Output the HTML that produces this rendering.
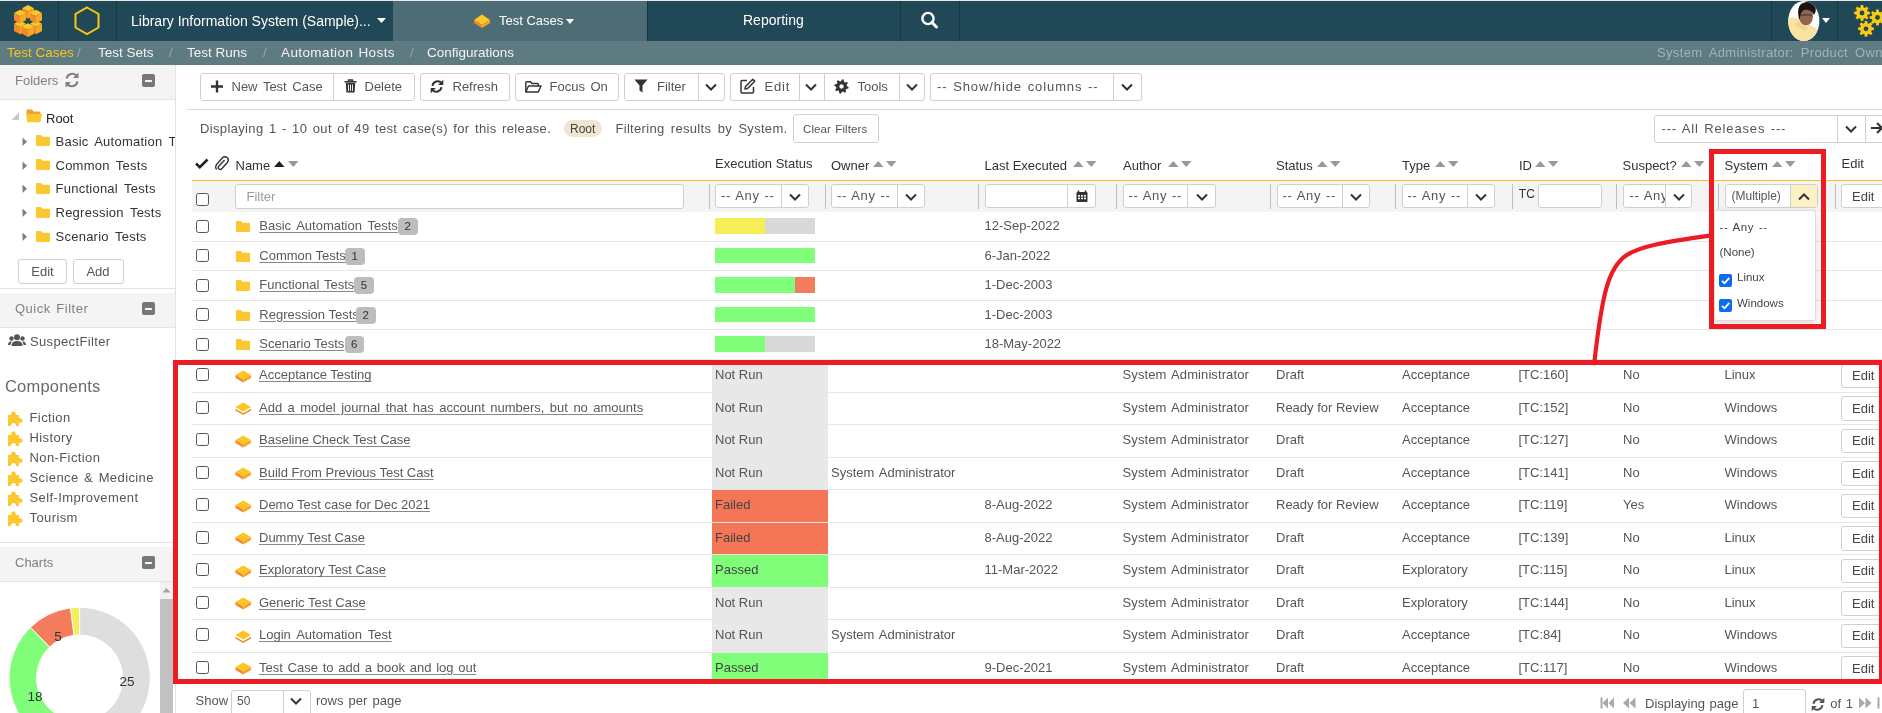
<!DOCTYPE html>
<html><head><meta charset="utf-8"><title>Test Cases</title>
<style>
html,body{margin:0;padding:0}
body{width:1882px;height:713px;overflow:hidden;position:relative;background:#fff;font-family:"Liberation Sans",sans-serif;font-size:13px;color:#555}
.a{position:absolute;display:block}
.t{position:absolute;white-space:nowrap;-webkit-font-smoothing:antialiased}
.btn{position:absolute;box-sizing:border-box;border:1px solid #cfcfcf;border-radius:3px;background:#fff;text-align:center;font-size:13px;color:#555}
</style></head><body><div id="root" style="position:absolute;left:0;top:0;width:1882px;height:713px;overflow:hidden;will-change:transform">
<div class="a" style="left:0px;top:0px;width:1882px;height:1px;background:#e9e9e9"></div>
<div class="a" style="left:0px;top:1px;width:1882px;height:40px;background:#214856"></div>
<div class="a" style="left:393px;top:1px;width:254px;height:40px;background:#4d6c75"></div>
<div class="a" style="left:58px;top:1px;width:1px;height:40px;background:#163642"></div>
<div class="a" style="left:116px;top:1px;width:1px;height:40px;background:#163642"></div>
<div class="a" style="left:647px;top:1px;width:1px;height:40px;background:#163642"></div>
<div class="a" style="left:900px;top:1px;width:1px;height:40px;background:#163642"></div>
<div class="a" style="left:959px;top:1px;width:1px;height:40px;background:#163642"></div>
<div class="a" style="left:1771px;top:1px;width:1px;height:40px;background:#163642"></div>
<div class="a" style="left:1837px;top:1px;width:1px;height:40px;background:#163642"></div>
<svg class="a" style="left:0px;top:0px;" width="58" height="41" viewBox="0 0 58 41"><path d="M28 5 L34 8.25 L28 11.5 L22 8.25 Z" fill="#fdc824"/><path d="M22 8.25 L28 11.5 L28 18.7 L22 15.45 Z" fill="#f28a2b"/><path d="M34 8.25 L28 11.5 L28 18.7 L34 15.45 Z" fill="#f5a82a"/><path d="M20 20.6 L26 23.85 L20 27.1 L14 23.85 Z" fill="#fdc824"/><path d="M14 23.85 L20 27.1 L20 34.300000000000004 L14 31.05 Z" fill="#f28a2b"/><path d="M26 23.85 L20 27.1 L20 34.300000000000004 L26 31.05 Z" fill="#f5a82a"/><path d="M36 20.6 L42 23.85 L36 27.1 L30 23.85 Z" fill="#fdc824"/><path d="M30 23.85 L36 27.1 L36 34.300000000000004 L30 31.05 Z" fill="#f28a2b"/><path d="M42 23.85 L36 27.1 L36 34.300000000000004 L42 31.05 Z" fill="#f5a82a"/><path d="M20 9.7 L26 12.95 L20 16.2 L14 12.95 Z" fill="#fdc824"/><path d="M14 12.95 L20 16.2 L20 23.4 L14 20.15 Z" fill="#f28a2b"/><path d="M26 12.95 L20 16.2 L20 23.4 L26 20.15 Z" fill="#f5a82a"/><path d="M36 9.7 L42 12.95 L36 16.2 L30 12.95 Z" fill="#fdc824"/><path d="M30 12.95 L36 16.2 L36 23.4 L30 20.15 Z" fill="#f28a2b"/><path d="M42 12.95 L36 16.2 L36 23.4 L42 20.15 Z" fill="#f5a82a"/><path d="M28 23.3 L34 26.55 L28 29.8 L22 26.55 Z" fill="#fdc824"/><path d="M22 26.55 L28 29.8 L28 37.0 L22 33.75 Z" fill="#f28a2b"/><path d="M34 26.55 L28 29.8 L28 37.0 L34 33.75 Z" fill="#f5a82a"/></svg>
<svg class="a" style="left:58px;top:0px;" width="58" height="41" viewBox="0 0 58 41"><path d="M29 7.5 L40.5 14 L40.5 27.5 L29 34 L17.5 27.5 L17.5 14 Z" fill="none" stroke="#f9c80e" stroke-width="2"/></svg>
<div class="t" style="left:131px;top:13.6px;font-size:14px;line-height:14px;color:#ffffff;">Library Information System (Sample)...</div>
<svg class="a" style="left:377px;top:17.5px;" width="10" height="6" viewBox="0 0 10 6"><path d="M0 0 L9 0 L4.5 5 Z" fill="#fff"/></svg>
<svg class="a" style="left:473px;top:13px;" width="18" height="16" viewBox="0 0 18 16"><path d="M9 1.5 L17 7 L9 12 L1 7 Z" fill="#fdc824"/><path d="M1 7 L9 12 L9 15 L1 10 Z" fill="#f28a2b"/><path d="M17 7 L9 12 L9 15 L17 10 Z" fill="#f5a62a"/></svg>
<div class="t" style="left:499px;top:14.0px;font-size:13px;line-height:13px;color:#ffffff;">Test Cases</div>
<svg class="a" style="left:566px;top:19px;" width="9" height="6" viewBox="0 0 9 6"><path d="M0 0 L8 0 L4 5 Z" fill="#fff"/></svg>
<div class="t" style="left:743px;top:13.1px;font-size:14px;line-height:14px;color:#ffffff;">Reporting</div>
<svg class="a" style="left:920px;top:11px;" width="20" height="19" viewBox="0 0 20 19"><circle cx="8" cy="7.5" r="5.6" fill="none" stroke="#fff" stroke-width="2.4"/><path d="M12 11.5 L16.5 16" stroke="#fff" stroke-width="3" stroke-linecap="round"/></svg>
<svg class="a" style="left:1786px;top:0px;" width="36" height="42" viewBox="0 0 36 42"><defs><clipPath id="av"><ellipse cx="17.8" cy="21" rx="15.6" ry="20"/></clipPath></defs><ellipse cx="17.8" cy="21" rx="15.6" ry="20" fill="#fdfdfd"/><g clip-path="url(#av)"><path d="M0 19 Q8 16 14 20 L22 24 Q30 27 36 34 L36 42 L0 42 Z" fill="#f9e2a2"/><path d="M10 21 L22 28 L20 31 L9 25 Z" fill="#f3d58c"/><ellipse cx="20" cy="16.5" rx="7" ry="8.8" fill="#8e6650"/><path d="M13 19 Q10 6 17 3 Q24 0 29 6 Q31 11 28 15 Q25 9 18 10 Q14 12 14 19 Z" fill="#1b1412"/><path d="M14 15 H26" stroke="#3a2a22" stroke-width="1"/></g></svg>
<svg class="a" style="left:1822px;top:18px;" width="9" height="6" viewBox="0 0 9 6"><path d="M0 0 L8 0 L4 5 Z" fill="#fff"/></svg>
<svg class="a" style="left:1838px;top:1px;" width="44" height="40" viewBox="0 0 44 40"><polygon points="29.75,10.57 31.89,10.69 31.89,13.31 29.75,13.43 29.07,15.05 30.51,16.65 28.65,18.51 27.05,17.07 25.43,17.75 25.31,19.89 22.69,19.89 22.57,17.75 20.95,17.07 19.35,18.51 17.49,16.65 18.93,15.05 18.25,13.43 16.11,13.31 16.11,10.69 18.25,10.57 18.93,8.95 17.49,7.35 19.35,5.49 20.95,6.93 22.57,6.25 22.69,4.11 25.31,4.11 25.43,6.25 27.05,6.93 28.65,5.49 30.51,7.35 29.07,8.95" fill="#f9cc14"/><circle cx="24" cy="12" r="2.40" fill="#214856"/><polygon points="45.25,15.07 47.39,15.19 47.39,17.81 45.25,17.93 44.57,19.55 46.01,21.15 44.15,23.01 42.55,21.57 40.93,22.25 40.81,24.39 38.19,24.39 38.07,22.25 36.45,21.57 34.85,23.01 32.99,21.15 34.43,19.55 33.75,17.93 31.61,17.81 31.61,15.19 33.75,15.07 34.43,13.45 32.99,11.85 34.85,9.99 36.45,11.43 38.07,10.75 38.19,8.61 40.81,8.61 40.93,10.75 42.55,11.43 44.15,9.99 46.01,11.85 44.57,13.45" fill="#f9cc14"/><circle cx="39.5" cy="16.5" r="2.40" fill="#214856"/><polygon points="33.75,26.37 35.89,26.49 35.89,29.11 33.75,29.23 33.07,30.85 34.51,32.45 32.65,34.31 31.05,32.87 29.43,33.55 29.31,35.69 26.69,35.69 26.57,33.55 24.95,32.87 23.35,34.31 21.49,32.45 22.93,30.85 22.25,29.23 20.11,29.11 20.11,26.49 22.25,26.37 22.93,24.75 21.49,23.15 23.35,21.29 24.95,22.73 26.57,22.05 26.69,19.91 29.31,19.91 29.43,22.05 31.05,22.73 32.65,21.29 34.51,23.15 33.07,24.75" fill="#f9cc14"/><circle cx="28" cy="27.8" r="2.40" fill="#214856"/></svg>
<div class="a" style="left:0px;top:41px;width:1882px;height:24px;background:#5f7b82"></div>
<div class="t" style="left:7px;top:45.6px;font-size:13.5px;line-height:13.5px;color:#f7c61a;">Test Cases</div>
<div class="t" style="left:77px;top:46.0px;font-size:13px;line-height:13px;color:#94a8ac;">/</div>
<div class="t" style="left:98px;top:45.6px;font-size:13.5px;line-height:13.5px;color:#f4f4f4;">Test Sets</div>
<div class="t" style="left:169px;top:46.0px;font-size:13px;line-height:13px;color:#94a8ac;">/</div>
<div class="t" style="left:187px;top:45.6px;font-size:13.5px;line-height:13.5px;color:#f4f4f4;">Test Runs</div>
<div class="t" style="left:263px;top:46.0px;font-size:13px;line-height:13px;color:#94a8ac;">/</div>
<div class="t" style="left:281px;top:45.6px;font-size:13.5px;line-height:13.5px;color:#f4f4f4;word-spacing:1px;letter-spacing:0.4px">Automation Hosts</div>
<div class="t" style="left:410px;top:46.0px;font-size:13px;line-height:13px;color:#94a8ac;">/</div>
<div class="t" style="left:427px;top:45.6px;font-size:13.5px;line-height:13.5px;color:#f4f4f4;">Configurations</div>
<div class="t" style="left:1657px;top:46.0px;font-size:13px;line-height:13px;color:#a3b3b6;word-spacing:3px;letter-spacing:0.35px">System Administrator: Product Owner</div>
<div class="a" style="left:0px;top:65px;width:175px;height:648px;background:#ffffff"></div>
<div class="a" style="left:175px;top:65px;width:1px;height:648px;background:#e3e3e3"></div>
<div class="a" style="left:0px;top:65px;width:175px;height:34px;background:#f4f4f4;border-bottom:1px solid #e4e4e4"></div>
<div class="t" style="left:15px;top:73.5px;font-size:13px;line-height:13px;color:#808080;">Folders</div>
<svg class="a" style="left:63px;top:71px;" width="18" height="18" viewBox="0 0 18 18"><path d="M3.5 7.5 A6 6 0 0 1 14 5" fill="none" stroke="#808080" stroke-width="2.2"/><path d="M15.5 1.5 L15.5 7 L10 7 Z" fill="#808080"/><path d="M14.5 10.5 A6 6 0 0 1 4 13" fill="none" stroke="#808080" stroke-width="2.2"/><path d="M2.5 16.5 L2.5 11 L8 11 Z" fill="#808080"/></svg>
<div class="a" style="left:142px;top:74px;width:13px;height:13px;background:#777;border-radius:2px"></div>
<div class="a" style="left:145px;top:79.5px;width:7px;height:2px;background:#f4f4f4"></div>
<svg class="a" style="left:11px;top:112px;" width="9" height="9" viewBox="0 0 9 9"><path d="M8 0.5 L8 8 L0.5 8 Z" fill="#c8c8c8"/></svg>
<svg class="a" style="left:26px;top:109px;" width="17" height="14" viewBox="0 0 17 14"><path d="M0.5 1.5 Q0.5 0.5 1.5 0.5 L6 0.5 L7.5 2.5 L13.5 2.5 Q14.5 2.5 14.5 3.5 L14.5 6 L0.5 6 Z" fill="#f0a030"/><path d="M0.3 5 L16 5 L14.5 12.5 Q14.3 13.3 13.5 13.3 L2 13.3 Q1.2 13.3 1 12.5 Z" fill="#fdc82f"/></svg>
<div class="t" style="left:46px;top:111.5px;font-size:13px;line-height:13px;color:#222;">Root</div>
<svg class="a" style="left:22px;top:136.6px;" width="6" height="10" viewBox="0 0 6 10"><path d="M0.5 0.5 L5 4.8 L0.5 9 Z" fill="#808080"/></svg>
<svg class="a" style="left:36px;top:135.1px;" width="14" height="11" viewBox="0 0 14 11"><path d="M0 1 Q0 0 1 0 L5 0 L6.5 1.8 L13 1.8 Q14 1.8 14 2.8 L14 10 Q14 11 13 11 L1 11 Q0 11 0 10 Z" fill="#fdc82f"/></svg>
<div class="t" style="left:55.5px;top:134.6px;font-size:13px;line-height:13px;color:#333;word-spacing:2.5px;letter-spacing:0.25px;width:119px;overflow:hidden;padding-bottom:5px">Basic Automation Tests</div>
<svg class="a" style="left:22px;top:160.5px;" width="6" height="10" viewBox="0 0 6 10"><path d="M0.5 0.5 L5 4.8 L0.5 9 Z" fill="#808080"/></svg>
<svg class="a" style="left:36px;top:159.0px;" width="14" height="11" viewBox="0 0 14 11"><path d="M0 1 Q0 0 1 0 L5 0 L6.5 1.8 L13 1.8 Q14 1.8 14 2.8 L14 10 Q14 11 13 11 L1 11 Q0 11 0 10 Z" fill="#fdc82f"/></svg>
<div class="t" style="left:55.5px;top:158.5px;font-size:13px;line-height:13px;color:#333;word-spacing:2.5px;letter-spacing:0.25px;width:119px;overflow:hidden;padding-bottom:5px">Common Tests</div>
<svg class="a" style="left:22px;top:184.39999999999998px;" width="6" height="10" viewBox="0 0 6 10"><path d="M0.5 0.5 L5 4.8 L0.5 9 Z" fill="#808080"/></svg>
<svg class="a" style="left:36px;top:182.89999999999998px;" width="14" height="11" viewBox="0 0 14 11"><path d="M0 1 Q0 0 1 0 L5 0 L6.5 1.8 L13 1.8 Q14 1.8 14 2.8 L14 10 Q14 11 13 11 L1 11 Q0 11 0 10 Z" fill="#fdc82f"/></svg>
<div class="t" style="left:55.5px;top:182.4px;font-size:13px;line-height:13px;color:#333;word-spacing:2.5px;letter-spacing:0.25px;width:119px;overflow:hidden;padding-bottom:5px">Functional Tests</div>
<svg class="a" style="left:22px;top:208.29999999999998px;" width="6" height="10" viewBox="0 0 6 10"><path d="M0.5 0.5 L5 4.8 L0.5 9 Z" fill="#808080"/></svg>
<svg class="a" style="left:36px;top:206.79999999999998px;" width="14" height="11" viewBox="0 0 14 11"><path d="M0 1 Q0 0 1 0 L5 0 L6.5 1.8 L13 1.8 Q14 1.8 14 2.8 L14 10 Q14 11 13 11 L1 11 Q0 11 0 10 Z" fill="#fdc82f"/></svg>
<div class="t" style="left:55.5px;top:206.3px;font-size:13px;line-height:13px;color:#333;word-spacing:2.5px;letter-spacing:0.25px;width:119px;overflow:hidden;padding-bottom:5px">Regression Tests</div>
<svg class="a" style="left:22px;top:232.2px;" width="6" height="10" viewBox="0 0 6 10"><path d="M0.5 0.5 L5 4.8 L0.5 9 Z" fill="#808080"/></svg>
<svg class="a" style="left:36px;top:230.7px;" width="14" height="11" viewBox="0 0 14 11"><path d="M0 1 Q0 0 1 0 L5 0 L6.5 1.8 L13 1.8 Q14 1.8 14 2.8 L14 10 Q14 11 13 11 L1 11 Q0 11 0 10 Z" fill="#fdc82f"/></svg>
<div class="t" style="left:55.5px;top:230.2px;font-size:13px;line-height:13px;color:#333;word-spacing:2.5px;letter-spacing:0.25px;width:119px;overflow:hidden;padding-bottom:5px">Scenario Tests</div>
<div class="btn" style="left:18px;top:258.5px;width:49px;height:25px;line-height:23px">Edit</div>
<div class="btn" style="left:72.5px;top:258.5px;width:51px;height:25px;line-height:23px">Add</div>
<div class="a" style="left:0px;top:288px;width:175px;height:1px;background:#e4e4e4"></div>
<div class="a" style="left:0px;top:293px;width:175px;height:34px;background:#f4f4f4;border-bottom:1px solid #e4e4e4"></div>
<div class="t" style="left:15px;top:301.7px;font-size:13px;line-height:13px;color:#808080;letter-spacing:0.5px;word-spacing:1.5px">Quick Filter</div>
<div class="a" style="left:142px;top:302px;width:13px;height:13px;background:#777;border-radius:2px"></div>
<div class="a" style="left:145px;top:307.5px;width:7px;height:2px;background:#f4f4f4"></div>
<svg class="a" style="left:8px;top:334px;" width="18" height="13" viewBox="0 0 18 13"><circle cx="9" cy="3.3" r="3" fill="#555"/><path d="M3.5 12 Q3.5 7 9 7 Q14.5 7 14.5 12 Z" fill="#555"/><circle cx="3.5" cy="4.5" r="2.2" fill="#555"/><path d="M0 11 Q0 7.5 3 7.5 L4 7.5 Q2.5 9 2.5 11 Z" fill="#555"/><circle cx="14.5" cy="4.5" r="2.2" fill="#555"/><path d="M18 11 Q18 7.5 15 7.5 L14 7.5 Q15.5 9 15.5 11 Z" fill="#555"/></svg>
<div class="t" style="left:30px;top:335.0px;font-size:13px;line-height:13px;color:#555;letter-spacing:0.35px">SuspectFilter</div>
<div class="t" style="left:5px;top:378.0px;font-size:16.5px;line-height:16.5px;color:#6a6a6a;font-weight:normal;letter-spacing:0.2px">Components</div>
<svg class="a" style="left:8px;top:410px;" width="16" height="16" viewBox="0 0 16 16"><path d="M0 5 L3 5 Q3 1.5 5.5 1.5 Q8 1.5 8 5 L11 5 L11 8 Q14.5 8 14.5 10.5 Q14.5 13 11 13 L11 16 L8 16 Q8 13 5.5 13 Q3 13 3 16 L0 16 Z" fill="#fdc82f"/></svg>
<div class="t" style="left:29.5px;top:411.0px;font-size:13px;line-height:13px;color:#555;letter-spacing:0.4px;word-spacing:1.5px">Fiction</div>
<svg class="a" style="left:8px;top:430px;" width="16" height="16" viewBox="0 0 16 16"><path d="M0 5 L3 5 Q3 1.5 5.5 1.5 Q8 1.5 8 5 L11 5 L11 8 Q14.5 8 14.5 10.5 Q14.5 13 11 13 L11 16 L8 16 Q8 13 5.5 13 Q3 13 3 16 L0 16 Z" fill="#fdc82f"/></svg>
<div class="t" style="left:29.5px;top:431.0px;font-size:13px;line-height:13px;color:#555;letter-spacing:0.4px;word-spacing:1.5px">History</div>
<svg class="a" style="left:8px;top:450px;" width="16" height="16" viewBox="0 0 16 16"><path d="M0 5 L3 5 Q3 1.5 5.5 1.5 Q8 1.5 8 5 L11 5 L11 8 Q14.5 8 14.5 10.5 Q14.5 13 11 13 L11 16 L8 16 Q8 13 5.5 13 Q3 13 3 16 L0 16 Z" fill="#fdc82f"/></svg>
<div class="t" style="left:29.5px;top:451.0px;font-size:13px;line-height:13px;color:#555;letter-spacing:0.4px;word-spacing:1.5px">Non-Fiction</div>
<svg class="a" style="left:8px;top:470px;" width="16" height="16" viewBox="0 0 16 16"><path d="M0 5 L3 5 Q3 1.5 5.5 1.5 Q8 1.5 8 5 L11 5 L11 8 Q14.5 8 14.5 10.5 Q14.5 13 11 13 L11 16 L8 16 Q8 13 5.5 13 Q3 13 3 16 L0 16 Z" fill="#fdc82f"/></svg>
<div class="t" style="left:29.5px;top:471.0px;font-size:13px;line-height:13px;color:#555;letter-spacing:0.4px;word-spacing:1.5px">Science &amp; Medicine</div>
<svg class="a" style="left:8px;top:490px;" width="16" height="16" viewBox="0 0 16 16"><path d="M0 5 L3 5 Q3 1.5 5.5 1.5 Q8 1.5 8 5 L11 5 L11 8 Q14.5 8 14.5 10.5 Q14.5 13 11 13 L11 16 L8 16 Q8 13 5.5 13 Q3 13 3 16 L0 16 Z" fill="#fdc82f"/></svg>
<div class="t" style="left:29.5px;top:491.0px;font-size:13px;line-height:13px;color:#555;letter-spacing:0.4px;word-spacing:1.5px">Self-Improvement</div>
<svg class="a" style="left:8px;top:510px;" width="16" height="16" viewBox="0 0 16 16"><path d="M0 5 L3 5 Q3 1.5 5.5 1.5 Q8 1.5 8 5 L11 5 L11 8 Q14.5 8 14.5 10.5 Q14.5 13 11 13 L11 16 L8 16 Q8 13 5.5 13 Q3 13 3 16 L0 16 Z" fill="#fdc82f"/></svg>
<div class="t" style="left:29.5px;top:511.0px;font-size:13px;line-height:13px;color:#555;letter-spacing:0.4px;word-spacing:1.5px">Tourism</div>
<div class="a" style="left:0px;top:542px;width:175px;height:1px;background:#e4e4e4"></div>
<div class="a" style="left:0px;top:547px;width:175px;height:34px;background:#f4f4f4;border-bottom:1px solid #e4e4e4"></div>
<div class="t" style="left:15px;top:555.7px;font-size:13px;line-height:13px;color:#808080;">Charts</div>
<div class="a" style="left:142px;top:556px;width:13px;height:13px;background:#777;border-radius:2px"></div>
<div class="a" style="left:145px;top:561.5px;width:7px;height:2px;background:#f4f4f4"></div>
<div class="a" style="left:160px;top:582px;width:13px;height:131px;background:#f1f1f1"></div>
<div class="a" style="left:160px;top:599px;width:13px;height:114px;background:#c1c1c1"></div>
<svg class="a" style="left:161px;top:586px;" width="11" height="8" viewBox="0 0 11 8"><path d="M1.5 6.5 L5.5 2 L9.5 6.5 Z" fill="#a3a3a3"/></svg>
<svg class="a" style="left:0px;top:582px;" width="160" height="131" viewBox="0 0 160 131"><g transform="translate(0,-582)"><path d="M79.60 607.40 A70.6 70.6 0 1 1 75.08 748.45 L76.84 720.91 A43 43 0 1 0 79.60 635.00 Z" fill="#dedede" stroke="#fff" stroke-width="1"/><path d="M75.08 748.45 A70.6 70.6 0 0 1 30.48 627.28 L49.69 647.11 A43 43 0 0 0 76.84 720.91 Z" fill="#80fe7a" stroke="#fff" stroke-width="1"/><path d="M30.48 627.28 A70.6 70.6 0 0 1 70.57 607.98 L74.10 635.35 A43 43 0 0 0 49.69 647.11 Z" fill="#f47b5b" stroke="#fff" stroke-width="1"/><path d="M70.57 607.98 A70.6 70.6 0 0 1 79.60 607.40 L79.60 635.00 A43 43 0 0 0 74.10 635.35 Z" fill="#f5ee55" stroke="#fff" stroke-width="1"/><text x="58" y="641" font-size="13.5" fill="#333" text-anchor="middle" font-family="Liberation Sans">5</text><text x="127" y="686" font-size="13.5" fill="#333" text-anchor="middle" font-family="Liberation Sans">25</text><text x="35" y="701" font-size="13.5" fill="#333" text-anchor="middle" font-family="Liberation Sans">18</text></g></svg>
<div class="a" style="left:200px;top:73px;width:215px;height:28px;box-sizing:border-box;border:1px solid #cfcfcf;border-radius:3px;background:#fff;"></div>
<div class="a" style="left:333px;top:74px;width:1px;height:26px;background:#cfcfcf"></div>
<div class="a" style="left:420px;top:73px;width:90px;height:28px;box-sizing:border-box;border:1px solid #cfcfcf;border-radius:3px;background:#fff;"></div>
<div class="a" style="left:515px;top:73px;width:104px;height:28px;box-sizing:border-box;border:1px solid #cfcfcf;border-radius:3px;background:#fff;"></div>
<div class="a" style="left:624px;top:73px;width:101px;height:28px;box-sizing:border-box;border:1px solid #cfcfcf;border-radius:3px;background:#fff;"></div>
<div class="a" style="left:698px;top:74px;width:1px;height:26px;background:#cfcfcf"></div>
<div class="a" style="left:730px;top:73px;width:195px;height:28px;box-sizing:border-box;border:1px solid #cfcfcf;border-radius:3px;background:#fff;"></div>
<div class="a" style="left:799px;top:74px;width:1px;height:26px;background:#cfcfcf"></div>
<div class="a" style="left:824px;top:74px;width:1px;height:26px;background:#cfcfcf"></div>
<div class="a" style="left:899px;top:74px;width:1px;height:26px;background:#cfcfcf"></div>
<div class="a" style="left:930px;top:73px;width:212px;height:28px;box-sizing:border-box;border:1px solid #cfcfcf;border-radius:3px;background:#fff;"></div>
<div class="a" style="left:1113px;top:74px;width:1px;height:26px;background:#cfcfcf"></div>
<svg class="a" style="left:210px;top:80px;" width="14" height="13" viewBox="0 0 14 13"><path d="M7 0.5 V12.5 M1 6.5 H13" stroke="#333" stroke-width="2.4"/></svg>
<svg class="a" style="left:344px;top:79px;" width="13" height="14" viewBox="0 0 13 14"><path d="M0.5 2.8 H12.5" stroke="#333" stroke-width="1.6"/><path d="M4.5 2.5 V1 H8.5 V2.5" fill="none" stroke="#333" stroke-width="1.4"/><path d="M1.8 4 H11.2 L10.6 13.5 H2.4 Z" fill="#333"/><path d="M4.5 5.5 V12 M6.5 5.5 V12 M8.5 5.5 V12" stroke="#fff" stroke-width="0.9"/></svg>
<svg class="a" style="left:430px;top:79px;" width="14" height="15" viewBox="0 0 14 15"><path d="M2.5 6.8 A5.2 5.2 0 0 1 11.6 4.2" fill="none" stroke="#333" stroke-width="2"/><path d="M13.3 0.8 L13.3 6 L8.1 6 Z" fill="#333"/><path d="M11.5 8.2 A5.2 5.2 0 0 1 2.4 10.8" fill="none" stroke="#333" stroke-width="2"/><path d="M0.7 14.2 L0.7 9 L5.9 9 Z" fill="#333"/></svg>
<svg class="a" style="left:525px;top:81px;" width="17" height="12" viewBox="0 0 17 12"><path d="M0.8 11 V1.6 Q0.8 0.8 1.6 0.8 H5.5 L7 2.5 H12.5 Q13.3 2.5 13.3 3.3 V5" fill="none" stroke="#333" stroke-width="1.4"/><path d="M0.8 11 L3.5 5 H16 L13.3 11 Z" fill="none" stroke="#333" stroke-width="1.4" stroke-linejoin="round"/></svg>
<svg class="a" style="left:634px;top:79px;" width="14" height="14" viewBox="0 0 14 14"><path d="M0.5 0.5 H13.5 L8.5 6.5 V13.5 L5.5 11.5 V6.5 Z" fill="#333"/></svg>
<svg class="a" style="left:740px;top:78px;" width="16" height="16" viewBox="0 0 16 16"><path d="M7 2.5 H2 Q1 2.5 1 3.5 V14 Q1 15 2 15 H12.5 Q13.5 15 13.5 14 V9" fill="none" stroke="#333" stroke-width="1.5"/><path d="M5.5 8.5 L12.8 1.2 L14.8 3.2 L7.5 10.5 L5 11 Z" fill="none" stroke="#333" stroke-width="1.5" stroke-linejoin="round"/></svg>
<svg class="a" style="left:834px;top:79px;" width="15" height="15" viewBox="0 0 15 15"><polygon points="14.67,8.21 14.39,9.59 12.20,10.01 11.62,10.88 12.07,13.07 10.89,13.85 9.05,12.60 8.02,12.80 6.79,14.67 5.41,14.39 4.99,12.20 4.12,11.62 1.93,12.07 1.15,10.89 2.40,9.05 2.20,8.02 0.33,6.79 0.61,5.41 2.80,4.99 3.38,4.12 2.93,1.93 4.11,1.15 5.95,2.40 6.98,2.20 8.21,0.33 9.59,0.61 10.01,2.80 10.88,3.38 13.07,2.93 13.85,4.11 12.60,5.95 12.80,6.98" fill="#333"/><circle cx="7.5" cy="7.5" r="2.16" fill="#fff"/></svg>
<svg class="a" style="left:705px;top:83px;" width="12" height="8" viewBox="0 0 12 8"><path d="M1 1.5 L6 6.5 L11 1.5" fill="none" stroke="#333" stroke-width="2"/></svg>
<svg class="a" style="left:805px;top:83px;" width="12" height="8" viewBox="0 0 12 8"><path d="M1 1.5 L6 6.5 L11 1.5" fill="none" stroke="#333" stroke-width="2"/></svg>
<svg class="a" style="left:906px;top:83px;" width="12" height="8" viewBox="0 0 12 8"><path d="M1 1.5 L6 6.5 L11 1.5" fill="none" stroke="#333" stroke-width="2"/></svg>
<svg class="a" style="left:1121px;top:83px;" width="12" height="8" viewBox="0 0 12 8"><path d="M1 1.5 L6 6.5 L11 1.5" fill="none" stroke="#333" stroke-width="2"/></svg>
<div class="t" style="left:231.5px;top:80.0px;font-size:13px;line-height:13px;color:#555;word-spacing:2px">New Test Case</div>
<div class="t" style="left:364.5px;top:80.0px;font-size:13px;line-height:13px;color:#555;">Delete</div>
<div class="t" style="left:452.5px;top:80.0px;font-size:13px;line-height:13px;color:#555;">Refresh</div>
<div class="t" style="left:549.5px;top:80.0px;font-size:13px;line-height:13px;color:#555;word-spacing:2px">Focus On</div>
<div class="t" style="left:657px;top:80.0px;font-size:13px;line-height:13px;color:#555;">Filter</div>
<div class="t" style="left:764.5px;top:80.0px;font-size:13px;line-height:13px;color:#555;letter-spacing:0.8px">Edit</div>
<div class="t" style="left:857.5px;top:80.0px;font-size:13px;line-height:13px;color:#555;">Tools</div>
<div class="t" style="left:937px;top:80.0px;font-size:13px;line-height:13px;color:#555;word-spacing:1.2px;letter-spacing:0.9px">-- Show/hide columns --</div>
<div class="a" style="left:187px;top:109px;width:1695px;height:1px;background:#dcdcdc"></div>
<div class="t" style="left:200px;top:121.5px;font-size:13px;line-height:13px;color:#555;word-spacing:1.5px;letter-spacing:0.35px">Displaying 1 - 10 out of 49 test case(s) for this release.</div>
<div class="a" style="left:564px;top:120px;width:38px;height:17px;background:#efe6d2;border-radius:9px"></div>
<div class="t" style="left:570px;top:123.3px;font-size:12px;line-height:12px;color:#444;">Root</div>
<div class="t" style="left:615.5px;top:121.5px;font-size:13px;line-height:13px;color:#555;word-spacing:2.5px;letter-spacing:0.3px">Filtering results by System.</div>
<div class="a" style="left:793px;top:114px;width:86px;height:29px;box-sizing:border-box;border:1px solid #cfcfcf;border-radius:3px;background:#fff;"></div>
<div class="t" style="left:803px;top:123.8px;font-size:11.5px;line-height:11.5px;color:#555;word-spacing:1px;letter-spacing:0.1px">Clear Filters</div>
<div class="a" style="left:1654px;top:115px;width:240px;height:28px;box-sizing:border-box;border:1px solid #cfcfcf;border-radius:3px;background:#fff;"></div>
<div class="a" style="left:1837px;top:116px;width:1px;height:26px;background:#cfcfcf"></div>
<div class="a" style="left:1865px;top:116px;width:1px;height:26px;background:#cfcfcf"></div>
<div class="t" style="left:1661.5px;top:122.0px;font-size:13px;line-height:13px;color:#555;word-spacing:1px;letter-spacing:0.85px">--- All Releases ---</div>
<svg class="a" style="left:1845px;top:125px;" width="12" height="8" viewBox="0 0 12 8"><path d="M1 1.5 L6 6.5 L11 1.5" fill="none" stroke="#333" stroke-width="2"/></svg>
<svg class="a" style="left:1870px;top:121px;" width="14" height="14" viewBox="0 0 14 14"><path d="M1 7 H12 M7 2 L12 7 L7 12" fill="none" stroke="#333" stroke-width="2"/></svg>
<svg class="a" style="left:195px;top:158px;" width="14" height="11" viewBox="0 0 14 11"><path d="M1 5.5 L4.8 9.2 L12.5 1.5" fill="none" stroke="#222" stroke-width="2.6"/></svg>
<svg class="a" style="left:215px;top:156px;" width="14" height="15" viewBox="0 0 14 15"><path d="M9.5 4 L4 10 Q2.5 11.8 4 13 Q5.5 14.2 7 12.5 L12.3 6.5 Q14.5 3.5 12 1.5 Q9.5 -0.5 7 2.3 L1.8 8.3 Q-0.5 11.5 1.8 13.5" fill="none" stroke="#333" stroke-width="1.4"/></svg>
<div class="t" style="left:235.5px;top:158.5px;font-size:13px;line-height:13px;color:#333;">Name</div>
<svg class="a" style="left:274.3px;top:161px;" width="11" height="6" viewBox="0 0 11 6"><path d="M0 6 L5.25 0 L10.5 6 Z" fill="#222"/></svg>
<svg class="a" style="left:287.6px;top:161px;" width="11" height="6" viewBox="0 0 11 6"><path d="M0 0 L10.5 0 L5.25 6 Z" fill="#999"/></svg>
<div class="t" style="left:715px;top:157.0px;font-size:13px;line-height:13px;color:#333;">Execution Status</div>
<div class="t" style="left:831px;top:158.5px;font-size:13px;line-height:13px;color:#333;">Owner</div>
<svg class="a" style="left:873px;top:161px;" width="11" height="6" viewBox="0 0 11 6"><path d="M0 6 L5.25 0 L10.5 6 Z" fill="#999"/></svg>
<svg class="a" style="left:886.3px;top:161px;" width="11" height="6" viewBox="0 0 11 6"><path d="M0 0 L10.5 0 L5.25 6 Z" fill="#999"/></svg>
<div class="t" style="left:984.5px;top:158.5px;font-size:13px;line-height:13px;color:#333;">Last Executed</div>
<svg class="a" style="left:1073px;top:161px;" width="11" height="6" viewBox="0 0 11 6"><path d="M0 6 L5.25 0 L10.5 6 Z" fill="#999"/></svg>
<svg class="a" style="left:1086.3px;top:161px;" width="11" height="6" viewBox="0 0 11 6"><path d="M0 0 L10.5 0 L5.25 6 Z" fill="#999"/></svg>
<div class="t" style="left:1123px;top:158.5px;font-size:13px;line-height:13px;color:#333;">Author</div>
<svg class="a" style="left:1168px;top:161px;" width="11" height="6" viewBox="0 0 11 6"><path d="M0 6 L5.25 0 L10.5 6 Z" fill="#999"/></svg>
<svg class="a" style="left:1181.3px;top:161px;" width="11" height="6" viewBox="0 0 11 6"><path d="M0 0 L10.5 0 L5.25 6 Z" fill="#999"/></svg>
<div class="t" style="left:1276px;top:158.5px;font-size:13px;line-height:13px;color:#333;">Status</div>
<svg class="a" style="left:1317px;top:161px;" width="11" height="6" viewBox="0 0 11 6"><path d="M0 6 L5.25 0 L10.5 6 Z" fill="#999"/></svg>
<svg class="a" style="left:1330.3px;top:161px;" width="11" height="6" viewBox="0 0 11 6"><path d="M0 0 L10.5 0 L5.25 6 Z" fill="#999"/></svg>
<div class="t" style="left:1402px;top:158.5px;font-size:13px;line-height:13px;color:#333;">Type</div>
<svg class="a" style="left:1434.7px;top:161px;" width="11" height="6" viewBox="0 0 11 6"><path d="M0 6 L5.25 0 L10.5 6 Z" fill="#999"/></svg>
<svg class="a" style="left:1448.0px;top:161px;" width="11" height="6" viewBox="0 0 11 6"><path d="M0 0 L10.5 0 L5.25 6 Z" fill="#999"/></svg>
<div class="t" style="left:1519px;top:158.5px;font-size:13px;line-height:13px;color:#333;">ID</div>
<svg class="a" style="left:1535px;top:161px;" width="11" height="6" viewBox="0 0 11 6"><path d="M0 6 L5.25 0 L10.5 6 Z" fill="#999"/></svg>
<svg class="a" style="left:1548.3px;top:161px;" width="11" height="6" viewBox="0 0 11 6"><path d="M0 0 L10.5 0 L5.25 6 Z" fill="#999"/></svg>
<div class="t" style="left:1622.5px;top:158.5px;font-size:13px;line-height:13px;color:#333;">Suspect?</div>
<svg class="a" style="left:1680.6px;top:161px;" width="11" height="6" viewBox="0 0 11 6"><path d="M0 6 L5.25 0 L10.5 6 Z" fill="#999"/></svg>
<svg class="a" style="left:1693.8999999999999px;top:161px;" width="11" height="6" viewBox="0 0 11 6"><path d="M0 0 L10.5 0 L5.25 6 Z" fill="#999"/></svg>
<div class="t" style="left:1724.5px;top:158.5px;font-size:13px;line-height:13px;color:#333;">System</div>
<svg class="a" style="left:1772px;top:161px;" width="11" height="6" viewBox="0 0 11 6"><path d="M0 6 L5.25 0 L10.5 6 Z" fill="#999"/></svg>
<svg class="a" style="left:1785.3px;top:161px;" width="11" height="6" viewBox="0 0 11 6"><path d="M0 0 L10.5 0 L5.25 6 Z" fill="#999"/></svg>
<div class="t" style="left:1841.5px;top:157.3px;font-size:13px;line-height:13px;color:#333;">Edit</div>
<div class="a" style="left:192px;top:179.5px;width:1690px;height:1.5px;background:#f7bf1a"></div>
<div class="a" style="left:192px;top:181px;width:1690px;height:31px;background:#f4f4f4"></div>
<div class="a" style="left:196px;top:193px;width:13px;height:13px;box-sizing:border-box;border:1.3px solid #555;border-radius:2.5px;background:#fff"></div>
<div class="a" style="left:235px;top:184px;width:449px;height:24.5px;box-sizing:border-box;border:1px solid #cfcfcf;border-radius:3px;background:#fff"></div>
<div class="t" style="left:246.5px;top:189.5px;font-size:13px;line-height:13px;color:#9a9a9a;">Filter</div>
<div class="a" style="left:708.5px;top:184px;width:1px;height:25px;background:#bdbdbd"></div>
<div class="a" style="left:824.5px;top:184px;width:1px;height:25px;background:#bdbdbd"></div>
<div class="a" style="left:977.5px;top:184px;width:1px;height:25px;background:#bdbdbd"></div>
<div class="a" style="left:1115.5px;top:184px;width:1px;height:25px;background:#bdbdbd"></div>
<div class="a" style="left:1269.5px;top:184px;width:1px;height:25px;background:#bdbdbd"></div>
<div class="a" style="left:1394.5px;top:184px;width:1px;height:25px;background:#bdbdbd"></div>
<div class="a" style="left:1511.5px;top:184px;width:1px;height:25px;background:#bdbdbd"></div>
<div class="a" style="left:1616.3px;top:184px;width:1px;height:25px;background:#bdbdbd"></div>
<div class="a" style="left:1717.5px;top:184px;width:1px;height:25px;background:#bdbdbd"></div>
<div class="a" style="left:1834.5px;top:184px;width:1px;height:25px;background:#bdbdbd"></div>
<div class="a" style="left:715px;top:184.4px;width:94px;height:24px;box-sizing:border-box;border:1px solid #cfcfcf;border-radius:3px;background:#fff;overflow:hidden"></div>
<div class="a" style="left:780.5px;top:185.4px;width:1px;height:22px;background:#cfcfcf"></div>
<svg class="a" style="left:788.75px;top:192.5px;" width="12" height="8" viewBox="0 0 12 8"><path d="M1 1.5 L6 6.5 L11 1.5" fill="none" stroke="#333" stroke-width="2"/></svg>
<div class="t" style="left:721px;top:189.3px;font-size:13px;line-height:13px;color:#555;letter-spacing:0.7px;word-spacing:0.5px">-- Any --</div>
<div class="a" style="left:831px;top:184.4px;width:94px;height:24px;box-sizing:border-box;border:1px solid #cfcfcf;border-radius:3px;background:#fff;overflow:hidden"></div>
<div class="a" style="left:896.5px;top:185.4px;width:1px;height:22px;background:#cfcfcf"></div>
<svg class="a" style="left:904.75px;top:192.5px;" width="12" height="8" viewBox="0 0 12 8"><path d="M1 1.5 L6 6.5 L11 1.5" fill="none" stroke="#333" stroke-width="2"/></svg>
<div class="t" style="left:837px;top:189.3px;font-size:13px;line-height:13px;color:#555;letter-spacing:0.7px;word-spacing:0.5px">-- Any --</div>
<div class="a" style="left:984.5px;top:184.4px;width:111.5px;height:24px;box-sizing:border-box;border:1px solid #cfcfcf;border-radius:3px;background:#fff"></div>
<div class="a" style="left:1067px;top:185.4px;width:1px;height:22px;background:#cfcfcf"></div>
<svg class="a" style="left:1076px;top:190px;" width="12" height="12" viewBox="0 0 12 12"><path d="M2.5 0.5 V3 M9.5 0.5 V3" stroke="#333" stroke-width="1.6"/><rect x="0.5" y="2" width="11" height="10" rx="1" fill="#333"/><g fill="#fff"><rect x="2" y="5" width="2" height="1.6"/><rect x="5" y="5" width="2" height="1.6"/><rect x="8" y="5" width="2" height="1.6"/><rect x="2" y="7.6" width="2" height="1.6"/><rect x="5" y="7.6" width="2" height="1.6"/><rect x="8" y="7.6" width="2" height="1.6"/></g></svg>
<div class="a" style="left:1122.5px;top:184.4px;width:93.5px;height:24px;box-sizing:border-box;border:1px solid #cfcfcf;border-radius:3px;background:#fff;overflow:hidden"></div>
<div class="a" style="left:1187.3px;top:185.4px;width:1px;height:22px;background:#cfcfcf"></div>
<svg class="a" style="left:1195.65px;top:192.5px;" width="12" height="8" viewBox="0 0 12 8"><path d="M1 1.5 L6 6.5 L11 1.5" fill="none" stroke="#333" stroke-width="2"/></svg>
<div class="t" style="left:1128.5px;top:189.3px;font-size:13px;line-height:13px;color:#555;letter-spacing:0.7px;word-spacing:0.5px">-- Any --</div>
<div class="a" style="left:1276.5px;top:184.4px;width:93px;height:24px;box-sizing:border-box;border:1px solid #cfcfcf;border-radius:3px;background:#fff;overflow:hidden"></div>
<div class="a" style="left:1341.6px;top:185.4px;width:1px;height:22px;background:#cfcfcf"></div>
<svg class="a" style="left:1349.55px;top:192.5px;" width="12" height="8" viewBox="0 0 12 8"><path d="M1 1.5 L6 6.5 L11 1.5" fill="none" stroke="#333" stroke-width="2"/></svg>
<div class="t" style="left:1282.5px;top:189.3px;font-size:13px;line-height:13px;color:#555;letter-spacing:0.7px;word-spacing:0.5px">-- Any --</div>
<div class="a" style="left:1401.5px;top:184.4px;width:93px;height:24px;box-sizing:border-box;border:1px solid #cfcfcf;border-radius:3px;background:#fff;overflow:hidden"></div>
<div class="a" style="left:1466.6px;top:185.4px;width:1px;height:22px;background:#cfcfcf"></div>
<svg class="a" style="left:1474.55px;top:192.5px;" width="12" height="8" viewBox="0 0 12 8"><path d="M1 1.5 L6 6.5 L11 1.5" fill="none" stroke="#333" stroke-width="2"/></svg>
<div class="t" style="left:1407.5px;top:189.3px;font-size:13px;line-height:13px;color:#555;letter-spacing:0.7px;word-spacing:0.5px">-- Any --</div>
<div class="t" style="left:1518.8px;top:188.3px;font-size:12px;line-height:12px;color:#333;">TC</div>
<div class="a" style="left:1538.3px;top:184.4px;width:63.5px;height:24px;box-sizing:border-box;border:1px solid #cfcfcf;border-radius:3px;background:#fff"></div>
<div class="a" style="left:1623.2px;top:184.4px;width:69px;height:24px;box-sizing:border-box;border:1px solid #cfcfcf;border-radius:3px;background:#fff"></div>
<div class="a" style="left:1624px;top:185px;width:40.5px;height:22px;overflow:hidden"><div class="t" style="left:5.5px;top:4.3px;font-size:13px;line-height:13px;color:#555;letter-spacing:0.7px;word-spacing:0.5px">-- Any --</div></div>
<div class="a" style="left:1664.8px;top:185.4px;width:1px;height:22px;background:#cfcfcf"></div>
<svg class="a" style="left:1672.5px;top:192.5px;" width="12" height="8" viewBox="0 0 12 8"><path d="M1 1.5 L6 6.5 L11 1.5" fill="none" stroke="#333" stroke-width="2"/></svg>
<div class="a" style="left:1724.5px;top:184.4px;width:93px;height:24px;box-sizing:border-box;border:1px solid #cfcfcf;border-radius:3px;background:#fff;overflow:hidden"></div>
<div class="a" style="left:1789.5px;top:185.4px;width:27.0px;height:22px;background:#fdf0c4;border-radius:0 2px 2px 0"></div>
<div class="a" style="left:1789.5px;top:185.4px;width:1px;height:22px;background:#cfcfcf"></div>
<svg class="a" style="left:1797.5px;top:192.5px;" width="12" height="8" viewBox="0 0 12 8"><path d="M1 6.5 L6 1.5 L11 6.5" fill="none" stroke="#333" stroke-width="2"/></svg>
<div class="t" style="left:1731.5px;top:190.1px;font-size:12px;line-height:12px;color:#555;">(Multiple)</div>
<div class="a" style="left:1841px;top:184.4px;width:60px;height:24px;box-sizing:border-box;border:1px solid #cfcfcf;border-radius:3px;background:#fff;"></div>
<div class="t" style="left:1852px;top:190.0px;font-size:13px;line-height:13px;color:#444;">Edit</div>
<div class="a" style="left:196px;top:219.5px;width:13px;height:13px;box-sizing:border-box;border:1.3px solid #555;border-radius:2.5px;background:#fff"></div>
<svg class="a" style="left:236px;top:221px;" width="14" height="11" viewBox="0 0 14 11"><path d="M0 1 Q0 0 1 0 L5 0 L6.5 1.8 L13 1.8 Q14 1.8 14 2.8 L14 10 Q14 11 13 11 L1 11 Q0 11 0 10 Z" fill="#fdc82f"/></svg>
<div class="t" style="left:259.3px;top:219.0px;font-size:13px;line-height:13px;color:#5a5a5a;text-decoration:underline;text-decoration-color:#888;text-underline-offset:2px;word-spacing:2.2px">Basic Automation Tests</div>
<div class="a" style="left:398px;top:218px;width:19.5px;height:17px;background:#bdbdbd;border-radius:4px"></div>
<div class="t" style="left:404.5px;top:221.0px;font-size:11.5px;line-height:11.5px;color:#333;">2</div>
<div class="a" style="left:715px;top:218px;width:50px;height:15.5px;background:#f5ee55"></div>
<div class="a" style="left:765px;top:218px;width:50px;height:15.5px;background:#d9d9d9"></div>
<div class="t" style="left:984.5px;top:219.0px;font-size:13px;line-height:13px;color:#555;">12-Sep-2022</div>
<div class="a" style="left:192px;top:241px;width:1690px;height:1px;background:#e6e6e6"></div>
<div class="a" style="left:196px;top:249.0px;width:13px;height:13px;box-sizing:border-box;border:1.3px solid #555;border-radius:2.5px;background:#fff"></div>
<svg class="a" style="left:236px;top:250.5px;" width="14" height="11" viewBox="0 0 14 11"><path d="M0 1 Q0 0 1 0 L5 0 L6.5 1.8 L13 1.8 Q14 1.8 14 2.8 L14 10 Q14 11 13 11 L1 11 Q0 11 0 10 Z" fill="#fdc82f"/></svg>
<div class="t" style="left:259.3px;top:248.5px;font-size:13px;line-height:13px;color:#5a5a5a;text-decoration:underline;text-decoration-color:#888;text-underline-offset:2px;word-spacing:0px">Common Tests</div>
<div class="a" style="left:345px;top:247.5px;width:19.5px;height:17px;background:#bdbdbd;border-radius:4px"></div>
<div class="t" style="left:351.5px;top:250.5px;font-size:11.5px;line-height:11.5px;color:#333;">1</div>
<div class="a" style="left:715px;top:247.5px;width:100px;height:15.5px;background:#80fe7a"></div>
<div class="t" style="left:984.5px;top:248.5px;font-size:13px;line-height:13px;color:#555;">6-Jan-2022</div>
<div class="a" style="left:192px;top:270px;width:1690px;height:1px;background:#e6e6e6"></div>
<div class="a" style="left:196px;top:278.5px;width:13px;height:13px;box-sizing:border-box;border:1.3px solid #555;border-radius:2.5px;background:#fff"></div>
<svg class="a" style="left:236px;top:280px;" width="14" height="11" viewBox="0 0 14 11"><path d="M0 1 Q0 0 1 0 L5 0 L6.5 1.8 L13 1.8 Q14 1.8 14 2.8 L14 10 Q14 11 13 11 L1 11 Q0 11 0 10 Z" fill="#fdc82f"/></svg>
<div class="t" style="left:259.3px;top:278.0px;font-size:13px;line-height:13px;color:#5a5a5a;text-decoration:underline;text-decoration-color:#888;text-underline-offset:2px;word-spacing:1.3px">Functional Tests</div>
<div class="a" style="left:354.2px;top:277px;width:19.5px;height:17px;background:#bdbdbd;border-radius:4px"></div>
<div class="t" style="left:360.7px;top:280.0px;font-size:11.5px;line-height:11.5px;color:#333;">5</div>
<div class="a" style="left:715px;top:277px;width:80px;height:15.5px;background:#80fe7a"></div>
<div class="a" style="left:795px;top:277px;width:20px;height:15.5px;background:#f47b5b"></div>
<div class="t" style="left:984.5px;top:278.0px;font-size:13px;line-height:13px;color:#555;">1-Dec-2003</div>
<div class="a" style="left:192px;top:300px;width:1690px;height:1px;background:#e6e6e6"></div>
<div class="a" style="left:196px;top:308.0px;width:13px;height:13px;box-sizing:border-box;border:1.3px solid #555;border-radius:2.5px;background:#fff"></div>
<svg class="a" style="left:236px;top:309.5px;" width="14" height="11" viewBox="0 0 14 11"><path d="M0 1 Q0 0 1 0 L5 0 L6.5 1.8 L13 1.8 Q14 1.8 14 2.8 L14 10 Q14 11 13 11 L1 11 Q0 11 0 10 Z" fill="#fdc82f"/></svg>
<div class="t" style="left:259.3px;top:307.5px;font-size:13px;line-height:13px;color:#5a5a5a;text-decoration:underline;text-decoration-color:#888;text-underline-offset:2px;word-spacing:0px">Regression Tests</div>
<div class="a" style="left:356px;top:306.5px;width:19.5px;height:17px;background:#bdbdbd;border-radius:4px"></div>
<div class="t" style="left:362.5px;top:309.5px;font-size:11.5px;line-height:11.5px;color:#333;">2</div>
<div class="a" style="left:715px;top:306.5px;width:100px;height:15.5px;background:#80fe7a"></div>
<div class="t" style="left:984.5px;top:307.5px;font-size:13px;line-height:13px;color:#555;">1-Dec-2003</div>
<div class="a" style="left:192px;top:329px;width:1690px;height:1px;background:#e6e6e6"></div>
<div class="a" style="left:196px;top:337.5px;width:13px;height:13px;box-sizing:border-box;border:1.3px solid #555;border-radius:2.5px;background:#fff"></div>
<svg class="a" style="left:236px;top:339px;" width="14" height="11" viewBox="0 0 14 11"><path d="M0 1 Q0 0 1 0 L5 0 L6.5 1.8 L13 1.8 Q14 1.8 14 2.8 L14 10 Q14 11 13 11 L1 11 Q0 11 0 10 Z" fill="#fdc82f"/></svg>
<div class="t" style="left:259.3px;top:337.0px;font-size:13px;line-height:13px;color:#5a5a5a;text-decoration:underline;text-decoration-color:#888;text-underline-offset:2px;word-spacing:0px">Scenario Tests</div>
<div class="a" style="left:344.5px;top:336px;width:19.5px;height:17px;background:#bdbdbd;border-radius:4px"></div>
<div class="t" style="left:351.0px;top:339.0px;font-size:11.5px;line-height:11.5px;color:#333;">6</div>
<div class="a" style="left:715px;top:336px;width:50px;height:15.5px;background:#80fe7a"></div>
<div class="a" style="left:765px;top:336px;width:50px;height:15.5px;background:#d9d9d9"></div>
<div class="t" style="left:984.5px;top:337.0px;font-size:13px;line-height:13px;color:#555;">18-May-2022</div>
<div class="a" style="left:192px;top:359px;width:1690px;height:1px;background:#e6e6e6"></div>
<div class="a" style="left:712px;top:359.0px;width:116px;height:32.5px;background:#e8e8e8"></div>
<div class="a" style="left:196px;top:368.2px;width:13px;height:13px;box-sizing:border-box;border:1.3px solid #555;border-radius:2.5px;background:#fff"></div>
<svg class="a" style="left:234.5px;top:369.5px;" width="17" height="13" viewBox="0 0 17 13"><path d="M8.2 0.5 L16 5 L8.2 9.5 L0.5 5 Z" fill="#fdc51f"/><path d="M0.5 5 L8.2 9.5 L8.2 12.5 L0.5 8 Z" fill="#f28a2b"/><path d="M16 5 L8.2 9.5 L8.2 12.5 L16 8 Z" fill="#f6a12a"/></svg>
<div class="t" style="left:259px;top:368.3px;font-size:13px;line-height:13px;color:#5a5a5a;text-decoration:underline;text-decoration-color:#888;text-underline-offset:2px;word-spacing:0px">Acceptance Testing</div>
<div class="t" style="left:715px;top:368.2px;font-size:13px;line-height:13px;color:#555;">Not Run</div>
<div class="t" style="left:1122.6px;top:368.4px;font-size:13px;line-height:13px;color:#555;word-spacing:1.5px;letter-spacing:0.1px">System Administrator</div>
<div class="t" style="left:1276px;top:368.4px;font-size:13px;line-height:13px;color:#555;">Draft</div>
<div class="t" style="left:1402px;top:368.4px;font-size:13px;line-height:13px;color:#555;">Acceptance</div>
<div class="t" style="left:1518.5px;top:368.4px;font-size:13px;line-height:13px;color:#555;">[TC:160]</div>
<div class="t" style="left:1623px;top:368.4px;font-size:13px;line-height:13px;color:#555;">No</div>
<div class="t" style="left:1724.5px;top:368.4px;font-size:13px;line-height:13px;color:#555;">Linux</div>
<div class="a" style="left:1841.4px;top:363.5px;width:60px;height:24.5px;box-sizing:border-box;border:1px solid #cfcfcf;border-radius:3px;background:#fff;"></div>
<div class="t" style="left:1852px;top:369.0px;font-size:13px;line-height:13px;color:#444;">Edit</div>
<div class="a" style="left:712px;top:391.5px;width:116px;height:32.5px;background:#e8e8e8"></div>
<div class="a" style="left:192px;top:391.5px;width:1690px;height:1px;background:#e6e6e6"></div>
<div class="a" style="left:196px;top:400.7px;width:13px;height:13px;box-sizing:border-box;border:1.3px solid #555;border-radius:2.5px;background:#fff"></div>
<svg class="a" style="left:234.5px;top:402.0px;" width="17" height="13" viewBox="0 0 17 13"><path d="M8.2 0.5 L16 5 L8.2 9.5 L0.5 5 Z" fill="#fdc51f"/><path d="M0.5 6.8 L8.2 11.3 L16 6.8 L16 8.5 L8.2 13 L0.5 8.5 Z" fill="#f28a2b"/></svg>
<div class="t" style="left:259px;top:400.8px;font-size:13px;line-height:13px;color:#5a5a5a;text-decoration:underline;text-decoration-color:#888;text-underline-offset:2px;word-spacing:1.85px">Add a model journal that has account numbers, but no amounts</div>
<div class="t" style="left:715px;top:400.7px;font-size:13px;line-height:13px;color:#555;">Not Run</div>
<div class="t" style="left:1122.6px;top:400.9px;font-size:13px;line-height:13px;color:#555;word-spacing:1.5px;letter-spacing:0.1px">System Administrator</div>
<div class="t" style="left:1276px;top:400.9px;font-size:13px;line-height:13px;color:#555;">Ready for Review</div>
<div class="t" style="left:1402px;top:400.9px;font-size:13px;line-height:13px;color:#555;">Acceptance</div>
<div class="t" style="left:1518.5px;top:400.9px;font-size:13px;line-height:13px;color:#555;">[TC:152]</div>
<div class="t" style="left:1623px;top:400.9px;font-size:13px;line-height:13px;color:#555;">No</div>
<div class="t" style="left:1724.5px;top:400.9px;font-size:13px;line-height:13px;color:#555;">Windows</div>
<div class="a" style="left:1841.4px;top:396.0px;width:60px;height:24.5px;box-sizing:border-box;border:1px solid #cfcfcf;border-radius:3px;background:#fff;"></div>
<div class="t" style="left:1852px;top:401.5px;font-size:13px;line-height:13px;color:#444;">Edit</div>
<div class="a" style="left:712px;top:424.0px;width:116px;height:32.5px;background:#e8e8e8"></div>
<div class="a" style="left:192px;top:424.0px;width:1690px;height:1px;background:#e6e6e6"></div>
<div class="a" style="left:196px;top:433.2px;width:13px;height:13px;box-sizing:border-box;border:1.3px solid #555;border-radius:2.5px;background:#fff"></div>
<svg class="a" style="left:234.5px;top:434.5px;" width="17" height="13" viewBox="0 0 17 13"><path d="M8.2 0.5 L16 5 L8.2 9.5 L0.5 5 Z" fill="#fdc51f"/><path d="M0.5 5 L8.2 9.5 L8.2 12.5 L0.5 8 Z" fill="#f28a2b"/><path d="M16 5 L8.2 9.5 L8.2 12.5 L16 8 Z" fill="#f6a12a"/></svg>
<div class="t" style="left:259px;top:433.3px;font-size:13px;line-height:13px;color:#5a5a5a;text-decoration:underline;text-decoration-color:#888;text-underline-offset:2px;word-spacing:0px">Baseline Check Test Case</div>
<div class="t" style="left:715px;top:433.2px;font-size:13px;line-height:13px;color:#555;">Not Run</div>
<div class="t" style="left:1122.6px;top:433.4px;font-size:13px;line-height:13px;color:#555;word-spacing:1.5px;letter-spacing:0.1px">System Administrator</div>
<div class="t" style="left:1276px;top:433.4px;font-size:13px;line-height:13px;color:#555;">Draft</div>
<div class="t" style="left:1402px;top:433.4px;font-size:13px;line-height:13px;color:#555;">Acceptance</div>
<div class="t" style="left:1518.5px;top:433.4px;font-size:13px;line-height:13px;color:#555;">[TC:127]</div>
<div class="t" style="left:1623px;top:433.4px;font-size:13px;line-height:13px;color:#555;">No</div>
<div class="t" style="left:1724.5px;top:433.4px;font-size:13px;line-height:13px;color:#555;">Windows</div>
<div class="a" style="left:1841.4px;top:428.5px;width:60px;height:24.5px;box-sizing:border-box;border:1px solid #cfcfcf;border-radius:3px;background:#fff;"></div>
<div class="t" style="left:1852px;top:434.0px;font-size:13px;line-height:13px;color:#444;">Edit</div>
<div class="a" style="left:712px;top:456.5px;width:116px;height:32.5px;background:#e8e8e8"></div>
<div class="a" style="left:192px;top:456.5px;width:1690px;height:1px;background:#e6e6e6"></div>
<div class="a" style="left:196px;top:465.7px;width:13px;height:13px;box-sizing:border-box;border:1.3px solid #555;border-radius:2.5px;background:#fff"></div>
<svg class="a" style="left:234.5px;top:467.0px;" width="17" height="13" viewBox="0 0 17 13"><path d="M8.2 0.5 L16 5 L8.2 9.5 L0.5 5 Z" fill="#fdc51f"/><path d="M0.5 5 L8.2 9.5 L8.2 12.5 L0.5 8 Z" fill="#f28a2b"/><path d="M16 5 L8.2 9.5 L8.2 12.5 L16 8 Z" fill="#f6a12a"/></svg>
<div class="t" style="left:259px;top:465.8px;font-size:13px;line-height:13px;color:#5a5a5a;text-decoration:underline;text-decoration-color:#888;text-underline-offset:2px;word-spacing:0px">Build From Previous Test Cast</div>
<div class="t" style="left:715px;top:465.7px;font-size:13px;line-height:13px;color:#555;">Not Run</div>
<div class="t" style="left:831px;top:465.9px;font-size:13px;line-height:13px;color:#555;word-spacing:1.5px">System Administrator</div>
<div class="t" style="left:1122.6px;top:465.9px;font-size:13px;line-height:13px;color:#555;word-spacing:1.5px;letter-spacing:0.1px">System Administrator</div>
<div class="t" style="left:1276px;top:465.9px;font-size:13px;line-height:13px;color:#555;">Draft</div>
<div class="t" style="left:1402px;top:465.9px;font-size:13px;line-height:13px;color:#555;">Acceptance</div>
<div class="t" style="left:1518.5px;top:465.9px;font-size:13px;line-height:13px;color:#555;">[TC:141]</div>
<div class="t" style="left:1623px;top:465.9px;font-size:13px;line-height:13px;color:#555;">No</div>
<div class="t" style="left:1724.5px;top:465.9px;font-size:13px;line-height:13px;color:#555;">Windows</div>
<div class="a" style="left:1841.4px;top:461.0px;width:60px;height:24.5px;box-sizing:border-box;border:1px solid #cfcfcf;border-radius:3px;background:#fff;"></div>
<div class="t" style="left:1852px;top:466.5px;font-size:13px;line-height:13px;color:#444;">Edit</div>
<div class="a" style="left:712px;top:489.0px;width:116px;height:32.5px;background:#f47656"></div>
<div class="a" style="left:192px;top:489.0px;width:1690px;height:1px;background:#e6e6e6"></div>
<div class="a" style="left:196px;top:498.2px;width:13px;height:13px;box-sizing:border-box;border:1.3px solid #555;border-radius:2.5px;background:#fff"></div>
<svg class="a" style="left:234.5px;top:499.5px;" width="17" height="13" viewBox="0 0 17 13"><path d="M8.2 0.5 L16 5 L8.2 9.5 L0.5 5 Z" fill="#fdc51f"/><path d="M0.5 5 L8.2 9.5 L8.2 12.5 L0.5 8 Z" fill="#f28a2b"/><path d="M16 5 L8.2 9.5 L8.2 12.5 L16 8 Z" fill="#f6a12a"/></svg>
<div class="t" style="left:259px;top:498.3px;font-size:13px;line-height:13px;color:#5a5a5a;text-decoration:underline;text-decoration-color:#888;text-underline-offset:2px;word-spacing:0px">Demo Test case for Dec 2021</div>
<div class="t" style="left:715px;top:498.2px;font-size:13px;line-height:13px;color:#444;">Failed</div>
<div class="t" style="left:984.5px;top:498.4px;font-size:13px;line-height:13px;color:#555;">8-Aug-2022</div>
<div class="t" style="left:1122.6px;top:498.4px;font-size:13px;line-height:13px;color:#555;word-spacing:1.5px;letter-spacing:0.1px">System Administrator</div>
<div class="t" style="left:1276px;top:498.4px;font-size:13px;line-height:13px;color:#555;">Ready for Review</div>
<div class="t" style="left:1402px;top:498.4px;font-size:13px;line-height:13px;color:#555;">Acceptance</div>
<div class="t" style="left:1518.5px;top:498.4px;font-size:13px;line-height:13px;color:#555;">[TC:119]</div>
<div class="t" style="left:1623px;top:498.4px;font-size:13px;line-height:13px;color:#555;">Yes</div>
<div class="t" style="left:1724.5px;top:498.4px;font-size:13px;line-height:13px;color:#555;">Windows</div>
<div class="a" style="left:1841.4px;top:493.5px;width:60px;height:24.5px;box-sizing:border-box;border:1px solid #cfcfcf;border-radius:3px;background:#fff;"></div>
<div class="t" style="left:1852px;top:499.0px;font-size:13px;line-height:13px;color:#444;">Edit</div>
<div class="a" style="left:712px;top:521.5px;width:116px;height:32.5px;background:#f47656"></div>
<div class="a" style="left:192px;top:521.5px;width:1690px;height:1px;background:#e6e6e6"></div>
<div class="a" style="left:196px;top:530.7px;width:13px;height:13px;box-sizing:border-box;border:1.3px solid #555;border-radius:2.5px;background:#fff"></div>
<svg class="a" style="left:234.5px;top:532.0px;" width="17" height="13" viewBox="0 0 17 13"><path d="M8.2 0.5 L16 5 L8.2 9.5 L0.5 5 Z" fill="#fdc51f"/><path d="M0.5 5 L8.2 9.5 L8.2 12.5 L0.5 8 Z" fill="#f28a2b"/><path d="M16 5 L8.2 9.5 L8.2 12.5 L16 8 Z" fill="#f6a12a"/></svg>
<div class="t" style="left:259px;top:530.8px;font-size:13px;line-height:13px;color:#5a5a5a;text-decoration:underline;text-decoration-color:#888;text-underline-offset:2px;word-spacing:0px">Dummy Test Case</div>
<div class="t" style="left:715px;top:530.7px;font-size:13px;line-height:13px;color:#444;">Failed</div>
<div class="t" style="left:984.5px;top:530.9px;font-size:13px;line-height:13px;color:#555;">8-Aug-2022</div>
<div class="t" style="left:1122.6px;top:530.9px;font-size:13px;line-height:13px;color:#555;word-spacing:1.5px;letter-spacing:0.1px">System Administrator</div>
<div class="t" style="left:1276px;top:530.9px;font-size:13px;line-height:13px;color:#555;">Draft</div>
<div class="t" style="left:1402px;top:530.9px;font-size:13px;line-height:13px;color:#555;">Acceptance</div>
<div class="t" style="left:1518.5px;top:530.9px;font-size:13px;line-height:13px;color:#555;">[TC:139]</div>
<div class="t" style="left:1623px;top:530.9px;font-size:13px;line-height:13px;color:#555;">No</div>
<div class="t" style="left:1724.5px;top:530.9px;font-size:13px;line-height:13px;color:#555;">Linux</div>
<div class="a" style="left:1841.4px;top:526.0px;width:60px;height:24.5px;box-sizing:border-box;border:1px solid #cfcfcf;border-radius:3px;background:#fff;"></div>
<div class="t" style="left:1852px;top:531.5px;font-size:13px;line-height:13px;color:#444;">Edit</div>
<div class="a" style="left:712px;top:554.0px;width:116px;height:32.5px;background:#80fe7a"></div>
<div class="a" style="left:192px;top:554.0px;width:1690px;height:1px;background:#e6e6e6"></div>
<div class="a" style="left:196px;top:563.2px;width:13px;height:13px;box-sizing:border-box;border:1.3px solid #555;border-radius:2.5px;background:#fff"></div>
<svg class="a" style="left:234.5px;top:564.5px;" width="17" height="13" viewBox="0 0 17 13"><path d="M8.2 0.5 L16 5 L8.2 9.5 L0.5 5 Z" fill="#fdc51f"/><path d="M0.5 5 L8.2 9.5 L8.2 12.5 L0.5 8 Z" fill="#f28a2b"/><path d="M16 5 L8.2 9.5 L8.2 12.5 L16 8 Z" fill="#f6a12a"/></svg>
<div class="t" style="left:259px;top:563.3px;font-size:13px;line-height:13px;color:#5a5a5a;text-decoration:underline;text-decoration-color:#888;text-underline-offset:2px;word-spacing:0px">Exploratory Test Case</div>
<div class="t" style="left:715px;top:563.2px;font-size:13px;line-height:13px;color:#444;">Passed</div>
<div class="t" style="left:984.5px;top:563.4px;font-size:13px;line-height:13px;color:#555;">11-Mar-2022</div>
<div class="t" style="left:1122.6px;top:563.4px;font-size:13px;line-height:13px;color:#555;word-spacing:1.5px;letter-spacing:0.1px">System Administrator</div>
<div class="t" style="left:1276px;top:563.4px;font-size:13px;line-height:13px;color:#555;">Draft</div>
<div class="t" style="left:1402px;top:563.4px;font-size:13px;line-height:13px;color:#555;">Exploratory</div>
<div class="t" style="left:1518.5px;top:563.4px;font-size:13px;line-height:13px;color:#555;">[TC:115]</div>
<div class="t" style="left:1623px;top:563.4px;font-size:13px;line-height:13px;color:#555;">No</div>
<div class="t" style="left:1724.5px;top:563.4px;font-size:13px;line-height:13px;color:#555;">Linux</div>
<div class="a" style="left:1841.4px;top:558.5px;width:60px;height:24.5px;box-sizing:border-box;border:1px solid #cfcfcf;border-radius:3px;background:#fff;"></div>
<div class="t" style="left:1852px;top:564.0px;font-size:13px;line-height:13px;color:#444;">Edit</div>
<div class="a" style="left:712px;top:586.5px;width:116px;height:32.5px;background:#e8e8e8"></div>
<div class="a" style="left:192px;top:586.5px;width:1690px;height:1px;background:#e6e6e6"></div>
<div class="a" style="left:196px;top:595.7px;width:13px;height:13px;box-sizing:border-box;border:1.3px solid #555;border-radius:2.5px;background:#fff"></div>
<svg class="a" style="left:234.5px;top:597.0px;" width="17" height="13" viewBox="0 0 17 13"><path d="M8.2 0.5 L16 5 L8.2 9.5 L0.5 5 Z" fill="#fdc51f"/><path d="M0.5 5 L8.2 9.5 L8.2 12.5 L0.5 8 Z" fill="#f28a2b"/><path d="M16 5 L8.2 9.5 L8.2 12.5 L16 8 Z" fill="#f6a12a"/></svg>
<div class="t" style="left:259px;top:595.8px;font-size:13px;line-height:13px;color:#5a5a5a;text-decoration:underline;text-decoration-color:#888;text-underline-offset:2px;word-spacing:0px">Generic Test Case</div>
<div class="t" style="left:715px;top:595.7px;font-size:13px;line-height:13px;color:#555;">Not Run</div>
<div class="t" style="left:1122.6px;top:595.9px;font-size:13px;line-height:13px;color:#555;word-spacing:1.5px;letter-spacing:0.1px">System Administrator</div>
<div class="t" style="left:1276px;top:595.9px;font-size:13px;line-height:13px;color:#555;">Draft</div>
<div class="t" style="left:1402px;top:595.9px;font-size:13px;line-height:13px;color:#555;">Exploratory</div>
<div class="t" style="left:1518.5px;top:595.9px;font-size:13px;line-height:13px;color:#555;">[TC:144]</div>
<div class="t" style="left:1623px;top:595.9px;font-size:13px;line-height:13px;color:#555;">No</div>
<div class="t" style="left:1724.5px;top:595.9px;font-size:13px;line-height:13px;color:#555;">Linux</div>
<div class="a" style="left:1841.4px;top:591.0px;width:60px;height:24.5px;box-sizing:border-box;border:1px solid #cfcfcf;border-radius:3px;background:#fff;"></div>
<div class="t" style="left:1852px;top:596.5px;font-size:13px;line-height:13px;color:#444;">Edit</div>
<div class="a" style="left:712px;top:619.0px;width:116px;height:32.5px;background:#e8e8e8"></div>
<div class="a" style="left:192px;top:619.0px;width:1690px;height:1px;background:#e6e6e6"></div>
<div class="a" style="left:196px;top:628.2px;width:13px;height:13px;box-sizing:border-box;border:1.3px solid #555;border-radius:2.5px;background:#fff"></div>
<svg class="a" style="left:234.5px;top:629.5px;" width="17" height="13" viewBox="0 0 17 13"><path d="M8.2 0.5 L16 5 L8.2 9.5 L0.5 5 Z" fill="#fdc51f"/><path d="M0.5 6.8 L8.2 11.3 L16 6.8 L16 8.5 L8.2 13 L0.5 8.5 Z" fill="#f28a2b"/></svg>
<div class="t" style="left:259px;top:628.3px;font-size:13px;line-height:13px;color:#5a5a5a;text-decoration:underline;text-decoration-color:#888;text-underline-offset:2px;word-spacing:2.5px">Login Automation Test</div>
<div class="t" style="left:715px;top:628.2px;font-size:13px;line-height:13px;color:#555;">Not Run</div>
<div class="t" style="left:831px;top:628.4px;font-size:13px;line-height:13px;color:#555;word-spacing:1.5px">System Administrator</div>
<div class="t" style="left:1122.6px;top:628.4px;font-size:13px;line-height:13px;color:#555;word-spacing:1.5px;letter-spacing:0.1px">System Administrator</div>
<div class="t" style="left:1276px;top:628.4px;font-size:13px;line-height:13px;color:#555;">Draft</div>
<div class="t" style="left:1402px;top:628.4px;font-size:13px;line-height:13px;color:#555;">Acceptance</div>
<div class="t" style="left:1518.5px;top:628.4px;font-size:13px;line-height:13px;color:#555;">[TC:84]</div>
<div class="t" style="left:1623px;top:628.4px;font-size:13px;line-height:13px;color:#555;">No</div>
<div class="t" style="left:1724.5px;top:628.4px;font-size:13px;line-height:13px;color:#555;">Windows</div>
<div class="a" style="left:1841.4px;top:623.5px;width:60px;height:24.5px;box-sizing:border-box;border:1px solid #cfcfcf;border-radius:3px;background:#fff;"></div>
<div class="t" style="left:1852px;top:629.0px;font-size:13px;line-height:13px;color:#444;">Edit</div>
<div class="a" style="left:712px;top:651.5px;width:116px;height:32.5px;background:#80fe7a"></div>
<div class="a" style="left:192px;top:651.5px;width:1690px;height:1px;background:#e6e6e6"></div>
<div class="a" style="left:196px;top:660.7px;width:13px;height:13px;box-sizing:border-box;border:1.3px solid #555;border-radius:2.5px;background:#fff"></div>
<svg class="a" style="left:234.5px;top:662.0px;" width="17" height="13" viewBox="0 0 17 13"><path d="M8.2 0.5 L16 5 L8.2 9.5 L0.5 5 Z" fill="#fdc51f"/><path d="M0.5 5 L8.2 9.5 L8.2 12.5 L0.5 8 Z" fill="#f28a2b"/><path d="M16 5 L8.2 9.5 L8.2 12.5 L16 8 Z" fill="#f6a12a"/></svg>
<div class="t" style="left:259px;top:660.8px;font-size:13px;line-height:13px;color:#5a5a5a;text-decoration:underline;text-decoration-color:#888;text-underline-offset:2px;word-spacing:1.15px">Test Case to add a book and log out</div>
<div class="t" style="left:715px;top:660.7px;font-size:13px;line-height:13px;color:#444;">Passed</div>
<div class="t" style="left:984.5px;top:660.9px;font-size:13px;line-height:13px;color:#555;">9-Dec-2021</div>
<div class="t" style="left:1122.6px;top:660.9px;font-size:13px;line-height:13px;color:#555;word-spacing:1.5px;letter-spacing:0.1px">System Administrator</div>
<div class="t" style="left:1276px;top:660.9px;font-size:13px;line-height:13px;color:#555;">Draft</div>
<div class="t" style="left:1402px;top:660.9px;font-size:13px;line-height:13px;color:#555;">Acceptance</div>
<div class="t" style="left:1518.5px;top:660.9px;font-size:13px;line-height:13px;color:#555;">[TC:117]</div>
<div class="t" style="left:1623px;top:660.9px;font-size:13px;line-height:13px;color:#555;">No</div>
<div class="t" style="left:1724.5px;top:660.9px;font-size:13px;line-height:13px;color:#555;">Windows</div>
<div class="a" style="left:1841.4px;top:656.0px;width:60px;height:24.5px;box-sizing:border-box;border:1px solid #cfcfcf;border-radius:3px;background:#fff;"></div>
<div class="t" style="left:1852px;top:661.5px;font-size:13px;line-height:13px;color:#444;">Edit</div>
<div class="t" style="left:195.5px;top:694.0px;font-size:13px;line-height:13px;color:#555;">Show</div>
<div class="a" style="left:231px;top:689.5px;width:80px;height:30px;box-sizing:border-box;border:1px solid #cfcfcf;border-radius:3px;background:#fff;"></div>
<div class="a" style="left:282.5px;top:690.5px;width:1px;height:28px;background:#cfcfcf"></div>
<div class="t" style="left:237px;top:695.3px;font-size:12px;line-height:12px;color:#555;">50</div>
<svg class="a" style="left:290px;top:697px;" width="12" height="8" viewBox="0 0 12 8"><path d="M1 1.5 L6 6.5 L11 1.5" fill="none" stroke="#333" stroke-width="2"/></svg>
<div class="t" style="left:316px;top:694.0px;font-size:13px;line-height:13px;color:#555;word-spacing:1.5px">rows per page</div>
<svg class="a" style="left:1600px;top:697px;" width="15" height="12" viewBox="0 0 15 12"><path d="M0.5 0.5 H2.5 V11.5 H0.5 Z M8 0.5 V11.5 L2.5 6 Z M14 0.5 V11.5 L8.5 6 Z" fill="#aaa"/></svg>
<svg class="a" style="left:1622px;top:697px;" width="15" height="12" viewBox="0 0 15 12"><path d="M7 0.5 V11.5 L1 6 Z M13.5 0.5 V11.5 L7.5 6 Z" fill="#aaa"/></svg>
<div class="t" style="left:1645px;top:696.8px;font-size:13px;line-height:13px;color:#555;word-spacing:1px">Displaying page</div>
<div class="a" style="left:1743.4px;top:689.3px;width:63px;height:30px;box-sizing:border-box;border:1px solid #cfcfcf;border-radius:3px;background:#fff;"></div>
<div class="t" style="left:1752px;top:697.0px;font-size:13px;line-height:13px;color:#555;">1</div>
<svg class="a" style="left:1811px;top:697px;" width="14" height="15" viewBox="0 0 14 15"><path d="M2.5 6.8 A5.2 5.2 0 0 1 11.6 4.2" fill="none" stroke="#555" stroke-width="2"/><path d="M13.3 0.8 L13.3 6 L8.1 6 Z" fill="#555"/><path d="M11.5 8.2 A5.2 5.2 0 0 1 2.4 10.8" fill="none" stroke="#555" stroke-width="2"/><path d="M0.7 14.2 L0.7 9 L5.9 9 Z" fill="#555"/></svg>
<div class="t" style="left:1830.3px;top:696.8px;font-size:13px;line-height:13px;color:#555;word-spacing:1px">of 1</div>
<svg class="a" style="left:1858px;top:697px;" width="15" height="12" viewBox="0 0 15 12"><path d="M1 0.5 V11.5 L7 6 Z M7.5 0.5 V11.5 L13.5 6 Z" fill="#aaa"/></svg>
<svg class="a" style="left:1877px;top:697px;" width="6" height="12" viewBox="0 0 6 12"><path d="M0.5 0.5 H2.5 V11.5 H0.5 Z" fill="#aaa"/></svg>
<div class="a" style="left:1713.7px;top:210px;width:102.7px;height:111px;box-sizing:border-box;background:#fff;border:1px solid #dcdcdc;border-radius:3px;box-shadow:0 3px 8px rgba(0,0,0,0.15)"></div>
<div class="t" style="left:1719.5px;top:221.8px;font-size:11.5px;line-height:11.5px;color:#444;letter-spacing:0.6px;word-spacing:1px">-- Any --</div>
<div class="t" style="left:1719.5px;top:247.1px;font-size:11.5px;line-height:11.5px;color:#444;">(None)</div>
<svg class="a" style="left:1719px;top:274px;" width="13" height="13" viewBox="0 0 13 13"><rect x="0" y="0" width="13" height="13" rx="2" fill="#0b6cf2"/><path d="M3 6.8 L5.5 9.3 L10.3 3.8" fill="none" stroke="#fff" stroke-width="1.8"/></svg>
<div class="t" style="left:1737px;top:272.3px;font-size:11.5px;line-height:11.5px;color:#444;">Linux</div>
<svg class="a" style="left:1719px;top:299.2px;" width="13" height="13" viewBox="0 0 13 13"><rect x="0" y="0" width="13" height="13" rx="2" fill="#0b6cf2"/><path d="M3 6.8 L5.5 9.3 L10.3 3.8" fill="none" stroke="#fff" stroke-width="1.8"/></svg>
<div class="t" style="left:1737px;top:297.5px;font-size:11.5px;line-height:11.5px;color:#444;">Windows</div>
<div class="a" style="left:1709px;top:149px;width:117px;height:180px;box-sizing:border-box;border:5px solid #eb1c24"></div>
<div class="a" style="left:173px;top:360px;width:1711px;height:324px;box-sizing:border-box;border:5px solid #eb1c24"></div>
<svg class="a" style="left:1580px;top:220px;" width="140" height="150" viewBox="0 0 140 150"><path d="M129.5 15.6 C 90 21, 60 26, 46 35.5 C 28 48, 22 75, 14.2 143.3" fill="none" stroke="#eb1c24" stroke-width="4.2" stroke-linecap="round"/></svg>
</div></body></html>
